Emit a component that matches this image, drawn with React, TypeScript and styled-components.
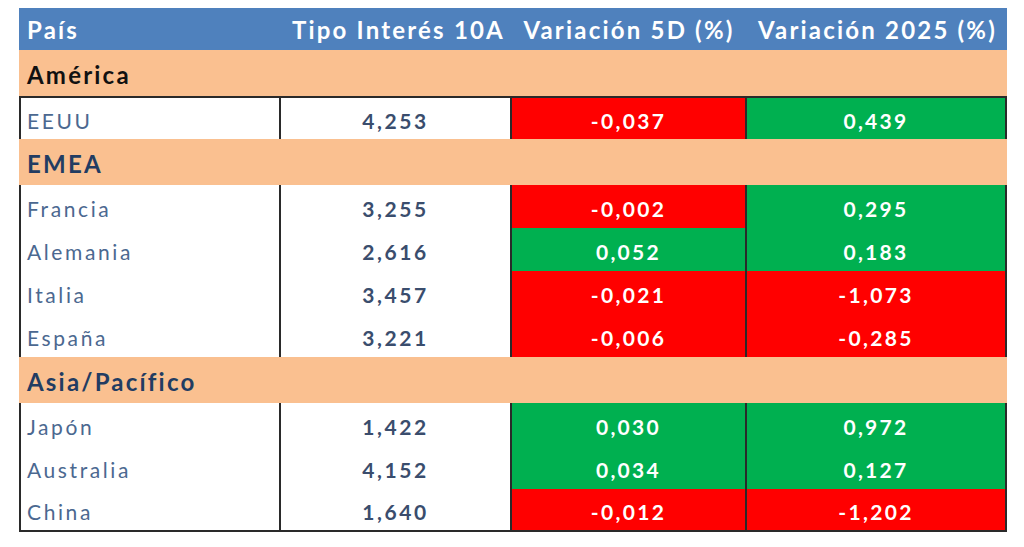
import React from 'react';
import styled, { createGlobalStyle } from 'styled-components';

const GlobalStyle = createGlobalStyle`
  html, body {
    margin: 0;
    padding: 0;
    background: #ffffff;
  }
  body {
    font-family: Lato, "Open Sans", "Liberation Sans", sans-serif;
  }
`;

// Excel-like palette
const BLUE = '#4f81bd';
const ORANGE = '#fac090';
const RED = '#ff0000';
const GREEN = '#00b050';
const LINE = '#2a2a2a';

const COLS = '260px 231px 235px 262px';

const Page = styled.div`
  padding: 8px 0 0 19px;
`;

const Table = styled.div`
  width: 988px;
  display: flex;
  flex-direction: column;
`;

const HeaderRow = styled.div`
  display: grid;
  grid-template-columns: ${COLS};
  height: 42px;
  background: ${BLUE};
`;

const HeadCell = styled.div<{ $align?: string }>`
  display: flex;
  align-items: center;
  justify-content: ${(p) => p.$align || 'center'};
  padding: 1px 5px 0 8px;
  color: #ffffff;
  font-size: 24px;
  font-weight: 700;
  white-space: nowrap;
  letter-spacing: 2.2px;
`;

const SectionRow = styled.div<{ $dark?: boolean }>`
  height: 44px;
  background: ${ORANGE};
  display: flex;
  align-items: center;
  padding: 2px 8px 0;
  font-size: 24px;
  font-weight: 700;
  color: ${(p) => (p.$dark ? '#111111' : '#223c62')};
  letter-spacing: 2.2px;
`;

const DataRow = styled.div<{ $top?: boolean; $bottom?: boolean }>`
  display: grid;
  grid-template-columns: ${COLS};
  height: 43px;
  box-sizing: border-box;
  border-top: ${(p) => (p.$top ? `2px solid ${LINE}` : 'none')};
  border-bottom: ${(p) => (p.$bottom ? `2px solid ${LINE}` : 'none')};
`;

const Cell = styled.div<{ $bg?: string; $last?: boolean }>`
  box-sizing: border-box;
  display: flex;
  align-items: center;
  justify-content: center;
  padding-top: 3px;
  background: ${(p) => p.$bg || '#ffffff'};
  border-left: 2px solid ${LINE};
  border-right: ${(p) => (p.$last ? `2px solid ${LINE}` : 'none')};
`;

const Country = styled(Cell)`
  justify-content: flex-start;
  padding-left: 6px;
  color: #4b6890;
  font-size: 21px;
  letter-spacing: 2.6px;
`;

const Rate = styled.span`
  color: #3a4d6d;
  font-size: 21px;
  font-weight: 700;
  letter-spacing: 2.6px;
`;

const Change = styled.span`
  color: #ffffff;
  font-size: 21px;
  font-weight: 700;
  letter-spacing: 2.3px;
`;

type Row = { name: string; rate: string; d5: string; ytd: string };

const groups: { title: string; dark?: boolean; rows: Row[] }[] = [
  {
    title: 'América',
    dark: true,
    rows: [{ name: 'EEUU', rate: '4,253', d5: '-0,037', ytd: '0,439' }],
  },
  {
    title: 'EMEA',
    rows: [
      { name: 'Francia', rate: '3,255', d5: '-0,002', ytd: '0,295' },
      { name: 'Alemania', rate: '2,616', d5: '0,052', ytd: '0,183' },
      { name: 'Italia', rate: '3,457', d5: '-0,021', ytd: '-1,073' },
      { name: 'España', rate: '3,221', d5: '-0,006', ytd: '-0,285' },
    ],
  },
  {
    title: 'Asia/Pacífico',
    rows: [
      { name: 'Japón', rate: '1,422', d5: '0,030', ytd: '0,972' },
      { name: 'Australia', rate: '4,152', d5: '0,034', ytd: '0,127' },
      { name: 'China', rate: '1,640', d5: '-0,012', ytd: '-1,202' },
    ],
  },
];

const tone = (v: string) => (v.startsWith('-') ? RED : GREEN);

export default function App() {
  return (
    <Page>
      <GlobalStyle />
      <Table>
        <HeaderRow>
          <HeadCell $align="flex-start">País</HeadCell>
          <HeadCell $align="flex-end">Tipo Interés 10A</HeadCell>
          <HeadCell>Variación 5D (%)</HeadCell>
          <HeadCell>Variación 2025 (%)</HeadCell>
        </HeaderRow>
        {groups.map((g, gi) => (
          <React.Fragment key={g.title}>
            <SectionRow $dark={g.dark}>{g.title}</SectionRow>
            {g.rows.map((r, ri) => (
              <DataRow
                key={r.name}
                $top={gi === 0 && ri === 0}
                $bottom={gi === groups.length - 1 && ri === g.rows.length - 1}
              >
                <Country>{r.name}</Country>
                <Cell>
                  <Rate>{r.rate}</Rate>
                </Cell>
                <Cell $bg={tone(r.d5)}>
                  <Change>{r.d5}</Change>
                </Cell>
                <Cell $bg={tone(r.ytd)} $last>
                  <Change>{r.ytd}</Change>
                </Cell>
              </DataRow>
            ))}
          </React.Fragment>
        ))}
      </Table>
    </Page>
  );
}
